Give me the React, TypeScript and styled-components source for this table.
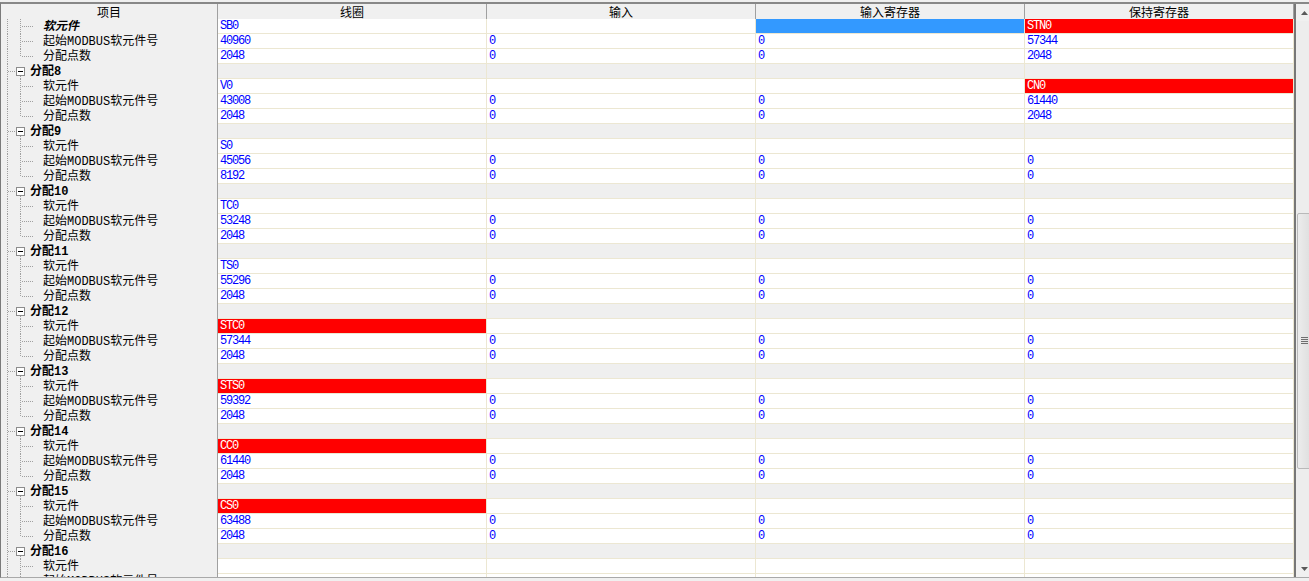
import React from "react";
import styled, { createGlobalStyle, css } from "styled-components";

const GlobalStyle = createGlobalStyle`
  html, body { margin: 0; padding: 0; background: #f0f0f0; }
  body { font-family: "Noto Sans CJK SC", sans-serif; }
  * { box-sizing: border-box; }
`;

const COLS = "217px 269px 269px 269px 269px";

const Root = styled.div`
  width: 1309px;
  height: 581px;
  overflow: hidden;
  background: #f0f0f0;
  padding-top: 2px;
`;

const Frame = styled.div`
  display: flex;
  width: 1313px;
  height: 576px;
  border-top: 2px solid #888888;
  border-bottom: 1px solid #a9a9a9;
  border-left: 1px solid #7a7a7a;
`;

const Grid = styled.div`
  flex: 0 0 1295px;
  display: flex;
  flex-direction: column;
  overflow: hidden;
  border-right: 2px solid #777777;
`;

const HeaderRow = styled.div`
  display: grid;
  grid-template-columns: ${COLS};
  flex: 0 0 15px;
  background: #f0f0f0;
`;

const HeaderCell = styled.div`
  border-right: 1px solid #a0a0a0;
  text-align: center;
  font-family: "Noto Sans CJK SC", sans-serif;
  font-size: 12px;
  line-height: 15px;
  color: #000;
  white-space: nowrap;
  overflow: hidden;
`;

const Row = styled.div`
  display: grid;
  grid-template-columns: ${COLS};
  flex: 0 0 15px;
  height: 15px;
`;

const TreeCell = styled.div`
  display: flex;
  align-items: center;
  background: #f0f0f0;
  border-right: 1px solid #a0a0a0;
  height: 15px;
  overflow: hidden;
  white-space: nowrap;
`;

const Label = styled.span<{ $group?: boolean; $focus?: boolean }>`
  font-family: "Liberation Mono", "Noto Sans CJK SC", monospace;
  font-size: 12px;
  line-height: 15px;
  padding-top: 1px;
  color: #000;
  ${(p) =>
    p.$group &&
    css`
      font-weight: bold;
      margin-left: 1px;
    `}
  ${(p) =>
    p.$focus &&
    css`
      font-weight: bold;
      font-style: italic;
    `}
`;

type Kind = "plain" | "group" | "red" | "sel";

const DataCell = styled.div<{ $kind: Kind }>`
  height: 15px;
  border-right: 1px solid #ece7d2;
  border-bottom: 1px solid #ece7d2;
  padding-left: 2px;
  font-family: "Liberation Mono", monospace;
  font-size: 12px;
  letter-spacing: -1.2px;
  line-height: 15px;
  white-space: nowrap;
  overflow: hidden;
  color: #0000ff;
  background: #ffffff;
  ${(p) =>
    p.$kind === "group" &&
    css`
      background: #efefef;
    `}
  ${(p) =>
    p.$kind === "red" &&
    css`
      background: #ff0000;
      color: #ffffff;
    `}
  ${(p) =>
    p.$kind === "sel" &&
    css`
      background: #3399ff;
      color: #ffffff;
    `}
`;

const VScroll = styled.div`
  flex: 0 0 17px;
  display: flex;
  flex-direction: column;
  background: #f0f0f0;
`;

const ScrollButton = styled.div`
  flex: 0 0 17px;
  display: flex;
  align-items: center;
  justify-content: center;
`;

const Track = styled.div`
  flex: 1;
  display: flex;
  flex-direction: column;
  background: #ededed;
`;

const Thumb = styled.div`
  margin: 192px 0 0 1px;
  width: 15px;
  height: 256px;
  border: 1px solid #b9b9b9;
  border-radius: 2px;
  background: linear-gradient(to right, #ececec, #dedede);
  display: flex;
  align-items: center;
  justify-content: center;
`;

type TreeKind = "leaf" | "last" | "group";

const DOT = "#a0a0a0";

function Connector({ kind }: { kind: TreeKind }) {
  const w = kind === "group" ? 28 : 42;
  return (
    <svg width={w} height={15} style={{ flex: "none", display: "block" }} shapeRendering="crispEdges">
      <line x1={6.5} y1={0} x2={6.5} y2={15} stroke={DOT} strokeDasharray="1 1" />
      {kind === "group" ? (
        <>
          <line x1={7} y1={7.5} x2={15} y2={7.5} stroke={DOT} strokeDasharray="1 1" />
          <rect x={15.5} y={3.5} width={8} height={8} fill="#ffffff" stroke="#8c8c8c" />
          <line x1={17} y1={7.5} x2={22} y2={7.5} stroke="#000000" />
          <line x1={19.5} y1={12} x2={19.5} y2={15} stroke={DOT} strokeDasharray="1 1" />
        </>
      ) : (
        <>
          <line x1={19.5} y1={0} x2={19.5} y2={kind === "last" ? 8 : 15} stroke={DOT} strokeDasharray="1 1" />
          <line x1={21} y1={7.5} x2={33} y2={7.5} stroke={DOT} strokeDasharray="1 1" />
        </>
      )}
    </svg>
  );
}

type CellDef = { t?: string; k?: Kind };

type RowDef =
  | { type: "group"; label: string }
  | { type: "leaf"; label: string; last?: boolean; focus?: boolean; cells: CellDef[] };

const c = (t: string): CellDef => ({ t });
const red = (t: string): CellDef => ({ t, k: "red" });
const empty: CellDef = {};

function group(
  n: number,
  dev: CellDef[],
  start: string[],
  count: string[],
  withHeader = true,
  focus = false
): RowDef[] {
  const rows: RowDef[] = [];
  if (withHeader) rows.push({ type: "group", label: `分配${n}` });
  rows.push({ type: "leaf", label: "软元件", focus, cells: dev });
  rows.push({ type: "leaf", label: "起始MODBUS软元件号", cells: start.map(c) });
  rows.push({ type: "leaf", label: "分配点数", last: true, cells: count.map(c) });
  return rows;
}

const rows: RowDef[] = [
  ...group(7, [c("SB0"), empty, { k: "sel" }, red("STN0")], ["40960", "0", "0", "57344"], ["2048", "0", "0", "2048"], false, true),
  ...group(8, [c("V0"), empty, empty, red("CN0")], ["43008", "0", "0", "61440"], ["2048", "0", "0", "2048"]),
  ...group(9, [c("S0"), empty, empty, empty], ["45056", "0", "0", "0"], ["8192", "0", "0", "0"]),
  ...group(10, [c("TC0"), empty, empty, empty], ["53248", "0", "0", "0"], ["2048", "0", "0", "0"]),
  ...group(11, [c("TS0"), empty, empty, empty], ["55296", "0", "0", "0"], ["2048", "0", "0", "0"]),
  ...group(12, [red("STC0"), empty, empty, empty], ["57344", "0", "0", "0"], ["2048", "0", "0", "0"]),
  ...group(13, [red("STS0"), empty, empty, empty], ["59392", "0", "0", "0"], ["2048", "0", "0", "0"]),
  ...group(14, [red("CC0"), empty, empty, empty], ["61440", "0", "0", "0"], ["2048", "0", "0", "0"]),
  ...group(15, [red("CS0"), empty, empty, empty], ["63488", "0", "0", "0"], ["2048", "0", "0", "0"]),
  { type: "group", label: "分配16" },
  { type: "leaf", label: "软元件", cells: [empty, empty, empty, empty] },
  { type: "leaf", label: "起始MODBUS软元件号", cells: [empty, empty, empty, empty] },
];

const headers = ["项目", "线圈", "输入", "输入寄存器", "保持寄存器"];

function Arrow({ up }: { up: boolean }) {
  return (
    <svg width={7} height={4} style={{ display: "block" }}>
      <polygon points={up ? "3.5,0 7,4 0,4" : "0,0 7,0 3.5,4"} fill="#5a5a5a" />
    </svg>
  );
}

function Grip() {
  return (
    <svg width={7} height={8} style={{ display: "block" }} shapeRendering="crispEdges">
      {[0.5, 2.5, 4.5, 6.5].map((y) => (
        <line key={y} x1={0} y1={y} x2={7} y2={y} stroke="#6e6e6e" />
      ))}
    </svg>
  );
}

export default function App() {
  return (
    <>
      <GlobalStyle />
      <Root>
        <Frame>
          <Grid>
            <HeaderRow>
              {headers.map((h) => (
                <HeaderCell key={h}>{h}</HeaderCell>
              ))}
            </HeaderRow>
            {rows.map((r, i) =>
              r.type === "group" ? (
                <Row key={i}>
                  <TreeCell>
                    <Connector kind="group" />
                    <Label $group>{r.label}</Label>
                  </TreeCell>
                  {[0, 1, 2, 3].map((j) => (
                    <DataCell key={j} $kind="group" />
                  ))}
                </Row>
              ) : (
                <Row key={i}>
                  <TreeCell>
                    <Connector kind={r.last ? "last" : "leaf"} />
                    <Label $focus={r.focus}>{r.label}</Label>
                  </TreeCell>
                  {r.cells.map((cell, j) => (
                    <DataCell key={j} $kind={cell.k ?? "plain"}>
                      {cell.t}
                    </DataCell>
                  ))}
                </Row>
              )
            )}
          </Grid>
          <VScroll>
            <ScrollButton>
              <Arrow up />
            </ScrollButton>
            <Track>
              <Thumb>
                <Grip />
              </Thumb>
            </Track>
            <ScrollButton>
              <Arrow up={false} />
            </ScrollButton>
          </VScroll>
        </Frame>
      </Root>
    </>
  );
}
